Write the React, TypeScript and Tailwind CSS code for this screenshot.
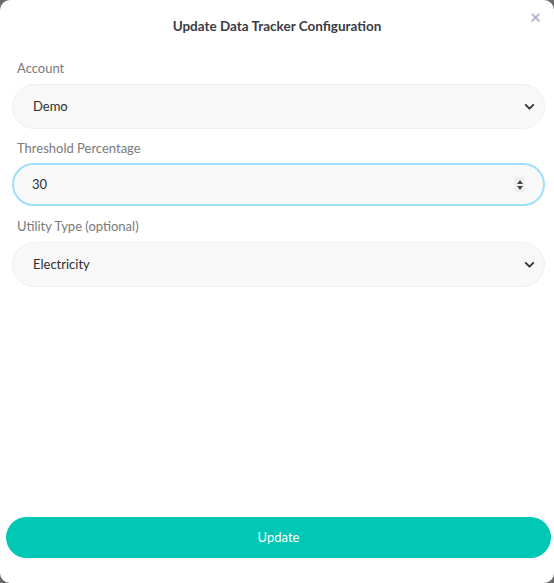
import React from 'react';

function Chevron() {
  return (
    <svg width="13" height="13" viewBox="0 0 24 24" fill="none" stroke="#333" strokeWidth="3.4" strokeLinecap="round" strokeLinejoin="round">
      <path d="M5 9l7 7 7-7" />
    </svg>
  );
}

function SelectField({ label, value }: { label: string; value: string }) {
  return (
    <div className="flex flex-col">
      <label className="text-[13px] text-[#7a7a7a] pl-[17px] mb-[8px] leading-4">{label}</label>
      <div className="ml-[12px] mr-[9px] h-[45px] rounded-full bg-[#f8f8f8] border border-[#efefef] flex items-center justify-between pl-[20px] pr-[8px]">
        <span className="text-[13px] text-[#2f2f2f]">{value}</span>
        <Chevron />
      </div>
    </div>
  );
}

export default function App() {
  return (
    <div className="w-[554px] h-[583px] bg-[#6b6b6b]" style={{ fontFamily: 'Lato, "Open Sans", sans-serif' }}>
      <div className="relative h-full bg-white rounded-[10px] flex flex-col">
        <button className="absolute top-[9px] right-[13px] text-[#b4b2c8] text-[19px] font-bold leading-4">×</button>
        <h2 className="text-center text-[13.5px] font-bold text-[#3b3b45] pt-[18px] leading-4">Update Data Tracker Configuration</h2>

        <div className="mt-[26px] flex flex-col gap-[12px]">
          <SelectField label="Account" value="Demo" />

          <div className="flex flex-col -mt-[1px]">
            <label className="text-[13px] text-[#7a7a7a] pl-[17px] mb-[7px] leading-4">Threshold Percentage</label>
            <div className="ml-[12px] mr-[9px] h-[43px] rounded-full bg-[#f9f9f9] border-2 border-[#9fdffb] flex items-center justify-between pl-[18px] pr-[18px]">
              <span className="text-[13px] text-[#2f2f2f]">30</span>
              <div className="w-[11px] h-[15px] bg-[#efefef] flex flex-col items-center justify-center gap-[2px]">
                <svg width="6" height="4" viewBox="0 0 6 4"><path d="M0 4L3 0L6 4Z" fill="#444" /></svg>
                <svg width="6" height="4" viewBox="0 0 6 4"><path d="M0 0L3 4L6 0Z" fill="#444" /></svg>
              </div>
            </div>
          </div>

          <SelectField label="Utility Type (optional)" value="Electricity" />
        </div>

        <div className="mt-auto pl-[6px] pr-[3px] pb-[25px]">
          <button className="w-full h-[41px] rounded-full bg-[#00c8b4] text-white text-[13px]">Update</button>
        </div>
      </div>
    </div>
  );
}
